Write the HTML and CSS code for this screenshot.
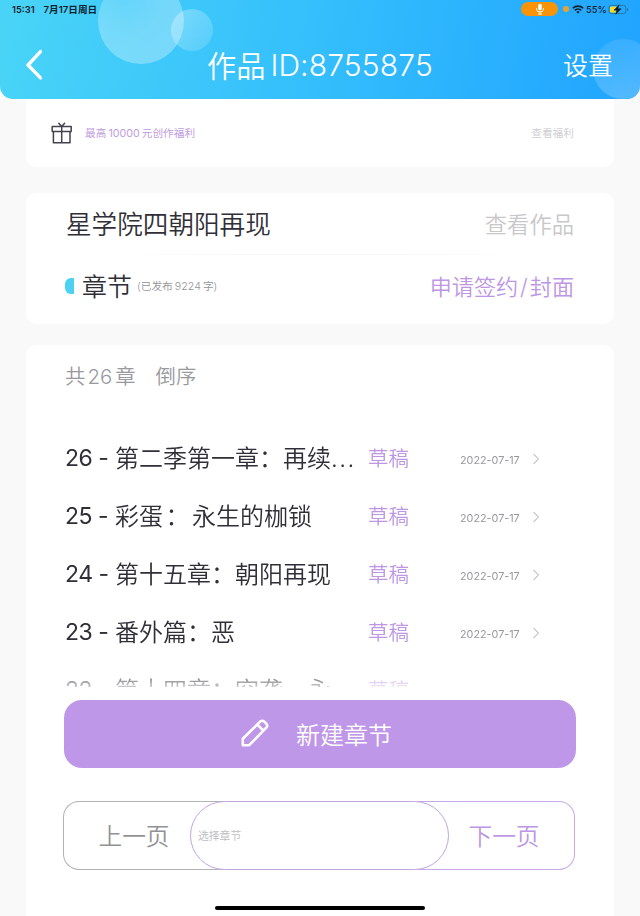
FILE: index.html
```html
<!DOCTYPE html>
<html lang="zh-CN">
<head>
    <meta charset="UTF-8">
    <meta name="viewport" content="width=device-width, initial-scale=1.0">
    <title>作品 ID:8755875</title>
    <link rel="stylesheet" href="styles.css">
</head>
<body>

    <header class="header">
        <span class="bubble bubble-big"></span>
        <span class="bubble bubble-small"></span>
        <span class="bubble bubble-right"></span>

        <div class="status">
            <span class="clock">15:31</span>
            <span class="date">7月17日周日</span>
            <span class="mic">
                <svg width="10" height="12" viewBox="0 0 10 12" fill="none" stroke="#fff">
                    <rect x="3.2" y="0.8" width="3.6" height="6.4" rx="1.8" fill="#fff" stroke="none"/>
                    <path d="M1.5 5v.8a3.5 3.2 0 0 0 7 0V5M5 9v2M3 11h4" stroke-width="1"/>
                </svg>
            </span>
            <span class="dot"></span>
            <svg class="wifi" width="12" height="9" viewBox="0 0 12 9" fill="none" stroke="#10222e" stroke-width="1.6">
                <path d="M.8 3.3a7.4 7.4 0 0 1 10.4 0M2.8 5.4a4.6 4.6 0 0 1 6.4 0"/>
                <path d="M6 8.6L4.3 6.9a2.5 2.5 0 0 1 3.4 0z" fill="#10222e" stroke="none"/>
            </svg>
            <span class="percent">55%</span>
            <svg class="battery" width="21" height="11" viewBox="0 0 21 11">
                <rect x=".9" y="1.4" width="17" height="8.2" rx="2.4" fill="none" stroke="#2a7298" stroke-width=".9"/>
                <path d="M19 4v3q1.4-.6 1.4-1.5T19 4z" fill="#2a7298"/>
                <rect x="2" y="2.5" width="6.5" height="6" rx="1.2" fill="#f4dc31"/>
                <path d="M11.2.8L5.9 6.2h3L7.8 10.2l5.3-5.5H9.8z" fill="#081c2a" stroke="#081c2a" stroke-width=".5"/>
            </svg>
        </div>

        <nav class="nav">
            <svg class="back" width="18" height="32" viewBox="0 0 18 32" fill="none" stroke="#fff" stroke-width="3.4" stroke-linecap="round" stroke-linejoin="round">
                <path d="M16.5 2.6L4 16l12.5 12.9"/>
            </svg>
            <h1><span class="work-label">作品</span><span class="work-id">ID:8755875</span></h1>
            <a class="setting">设置</a>
        </nav>
    </header>

    <main>
        <section class="card welfare">
            <svg width="22" height="22" viewBox="0 0 22 22" fill="none" stroke="#44424c" stroke-width="1.5" stroke-linejoin="round" stroke-linecap="round">
                <path d="M1.2 4.6h19v5h-19zM2.4 9.6v11.2h16.6V9.6M10.7 4.6v16.2M7.8 1.2l2.9 3.2 2.9-3.2"/>
            </svg>
            <span class="welfare-text">最高<i>10000</i>元创作福利</span>
            <span class="welfare-link">查看福利</span>
        </section>

        <section class="card work">
            <div class="work-row">
                <h2 class="work-title">星学院四朝阳再现</h2>
                <span class="work-link">查看作品</span>
            </div>
            <hr class="line">
            <div class="work-row">
                <span class="mark"></span>
                <h2 class="chapter-title">章节</h2>
                <span class="published">(已发布<i>9224</i>字)</span>
                <span class="sign">申请签约<i>/</i>封面</span>
            </div>
        </section>

        <section class="card chapters">
            <div class="total">
                <span>共<i>26</i>章</span>
                <span>倒序</span>
            </div>

            <ul class="list">
                <li>
                    <span class="num">26 -</span>
                    <span class="name">第二季第一章：再续<i class="more">...</i></span>
                    <span class="draft">草稿</span>
                    <span class="day">2022-07-17</span>
                    <svg class="arrow" width="8" height="12" viewBox="0 0 8 12"><path d="M1.5 1l5 5-5 5"/></svg>
                </li>
                <li>
                    <span class="num">25 -</span>
                    <span class="name">彩蛋<b class="colon">：</b>永生的枷锁</span>
                    <span class="draft">草稿</span>
                    <span class="day">2022-07-17</span>
                    <svg class="arrow" width="8" height="12" viewBox="0 0 8 12"><path d="M1.5 1l5 5-5 5"/></svg>
                </li>
                <li>
                    <span class="num">24 -</span>
                    <span class="name">第十五章：朝阳再现</span>
                    <span class="draft">草稿</span>
                    <span class="day">2022-07-17</span>
                    <svg class="arrow" width="8" height="12" viewBox="0 0 8 12"><path d="M1.5 1l5 5-5 5"/></svg>
                </li>
                <li>
                    <span class="num">23 -</span>
                    <span class="name">番外篇：恶</span>
                    <span class="draft">草稿</span>
                    <span class="day">2022-07-17</span>
                    <svg class="arrow" width="8" height="12" viewBox="0 0 8 12"><path d="M1.5 1l5 5-5 5"/></svg>
                </li>
                <li>
                    <span class="num">22 -</span>
                    <span class="name">第十四章：空袭，永</span>
                    <span class="draft">草稿</span>
                </li>
            </ul>

            <button class="create">
                <svg width="28" height="28" viewBox="0 0 28 28" fill="none" stroke="#fff" stroke-width="2.6" stroke-linejoin="round">
                    <path d="M1.8 26.2v-6.5L19.2 2.6q2-1.7 4 0l2.1 2.1q1.8 2 0 4L8.2 26.2zM16.4 5.6l6 6"/>
                </svg>
                <span>新建章节</span>
            </button>

            <div class="pager">
                <button class="prev">上一页</button>
                <input class="pick" type="text" placeholder="选择章节">
                <button class="next">下一页</button>
            </div>

            <div class="home"></div>
        </section>
    </main>

</body>
</html>
```

FILE: styles.css
```css
* { box-sizing: border-box; margin: 0; padding: 0; }

body {
    width: 640px;
    height: 916px;
    overflow: hidden;
    background: #f9f9f9;
    color: #302f37;
    font-family: Inter, "Noto Sans CJK SC", sans-serif;
    font-weight: 350;
    white-space: nowrap;
}

h1, h2, i, b { font-weight: inherit; font-style: normal; }
button { font-family: inherit; font-weight: inherit; background: none; }

/* header */
.header {
    position: relative;
    height: 99px;
    overflow: hidden;
    border-radius: 0 0 13px 13px;
    background: linear-gradient(100deg, #49d4f7 0%, #35bffc 48%, #20a4ff 100%);
}

.bubble { position: absolute; border-radius: 50%; }
.bubble-big { left: 98px; top: -22px; width: 86px; height: 86px; background: radial-gradient(circle at 30% 20%, rgba(255,255,255,.18), rgba(255,255,255,.28) 45%, rgba(255,255,255,.32)); }
.bubble-small { left: 171px; top: 9px; width: 42px; height: 42px; background: linear-gradient(130deg, rgba(255,255,255,.32), rgba(255,255,255,.13)); }
.bubble-right { left: 593px; top: 39px; width: 60px; height: 60px; background: linear-gradient(160deg, rgba(255,255,255,.08), rgba(255,255,255,.24)); }

.status {
    position: relative;
    display: flex;
    align-items: center;
    height: 18px;
    padding: 0 11px 0 12px;
    color: #10222e;
    font-size: 9.3px;
    font-weight: 600;
}
.date { margin-left: 9px; font-size: 9.6px; }
.mic { display: flex; justify-content: center; align-items: center; width: 37px; height: 14px; margin-left: auto; border-radius: 7px; background: #f99408; }
.dot { width: 6px; height: 6px; margin-left: 5px; border-radius: 50%; background: #eca12c; }
.wifi { margin-left: 3px; }
.percent { width: 20px; margin-left: 2px; font-size: 9.3px; font-weight: 500; }
.battery { margin-left: 2px; }

.nav { position: relative; display: flex; align-items: center; height: 94px; padding: 0 27px 0 24px; color: #fff; }
.nav h1 { display: flex; align-items: center; margin-left: 165px; font-size: 30px; }
.work-label { padding-bottom: 2px; font-size: 29.2px; }
.work-id { margin-left: 5px; letter-spacing: .15px; }
.setting { margin-left: auto; padding-bottom: 2px; font-size: 25px; }

/* cards */
.card { width: 588px; margin: 0 auto; background: #fff; border-radius: 11px; }

.welfare { display: flex; align-items: center; height: 68px; padding: 0 40px 0 25px; border-radius: 0 0 11px 11px; font-size: 10.7px; font-weight: 400; }
.welfare-text { margin-left: 12px; padding-bottom: 1px; color: #c19ddf; }
.welfare-text i { margin: 0 2px; }
.welfare-link { margin-left: auto; padding-bottom: 1px; color: #cfcfd1; }

.work { height: 131px; margin-top: 26px; padding: 0 40px 0 39px; }
.work-row { display: flex; align-items: center; height: 61px; padding-bottom: 2px; }
.line { width: 440px; height: 1px; margin: 0 auto 1px; border: 0; background: linear-gradient(90deg, transparent, #f6f6f6 30%, #f6f6f6 70%, transparent); }
.work-title { margin-left: 1px; font-size: 25.6px; }
.work-link { margin-left: auto; color: #c8c8c9; font-size: 22.3px; }
.mark { width: 9px; height: 16px; border-radius: 6px 0 0 6px; background: #4dd1f2; }
.chapter-title { margin-left: 8px; padding-bottom: 1px; font-size: 25px; }
.published { margin-left: 5px; color: #95949a; font-size: 10.7px; }
.published i { margin: 0 2px; }
.sign { margin-left: auto; padding-bottom: 1px; color: #bd97e3; font-size: 22.1px; }
.sign i { margin: 0 2px; }

/* chapter list */
.chapters { height: 571px; margin-top: 21px; padding: 0 38px; border-radius: 11px 11px 0 0; }
.total { display: flex; align-items: center; gap: 20px; height: 60px; padding: 0 0 1px 1px; color: #99989d; font-size: 20.4px; }
.total i { margin: 0 3px 0 2px; }

.list { height: 260px; margin-top: 22px; overflow: hidden; list-style: none; -webkit-mask-image: linear-gradient(#000 240px, rgba(0,0,0,.25) 260px); mask-image: linear-gradient(#000 240px, rgba(0,0,0,.25) 260px); }
.list li { display: flex; align-items: center; height: 58px; padding: 1px 0 0 1px; font-size: 24px; }
.num { width: 50px; padding-top: 2px; font-size: 23px; font-weight: 400; letter-spacing: -.5px; }
.name { width: 253px; }
.more { letter-spacing: 1.5px; }
.colon { display: inline-block; width: 29px; text-align: center; }
.draft { width: 92px; padding-top: 1px; color: #bd97e3; font-size: 20.5px; }
.day { width: 72px; padding-top: 7px; color: #98979b; font-size: 10.8px; font-weight: 400; }
.arrow { margin-top: 4px; fill: none; stroke: #c8c8cb; stroke-width: 1.1; }

.create {
    display: flex;
    align-items: center;
    justify-content: center;
    gap: 27px;
    width: 512px;
    height: 68px;
    margin-top: 13px;
    padding: 0 7px 2px 0;
    border: 0;
    border-radius: 18px;
    background: #bf97e8;
    color: #fff;
    font-size: 24px;
}

.pager { display: flex; height: 69px; margin-top: 33px; margin-left: -1px; }
.prev, .next { width: 161px; padding-bottom: 1px; border: 1px solid #b3b2b6; color: #929196; font-size: 23.7px; }
.prev { padding-right: 20px; border-right: 0; border-radius: 16px 0 0 16px; }
.next { width: 158px; padding-left: 17px; border-color: #c8a8e5; border-left: 0; border-radius: 0 16px 16px 0; color: #bd97e3; }
.pick { position: relative; width: 259px; margin: 0 -32px 0 -34px; padding: 1px 7px 0; border: 1px solid #c1a5e0; border-radius: 35px; background: #fff; font-family: inherit; font-size: 10.8px; }
.pick::placeholder { color: #c0bfc3; }

.home { width: 210px; height: 4px; margin: 36px auto 0; border-radius: 2px; background: #000; }
```
